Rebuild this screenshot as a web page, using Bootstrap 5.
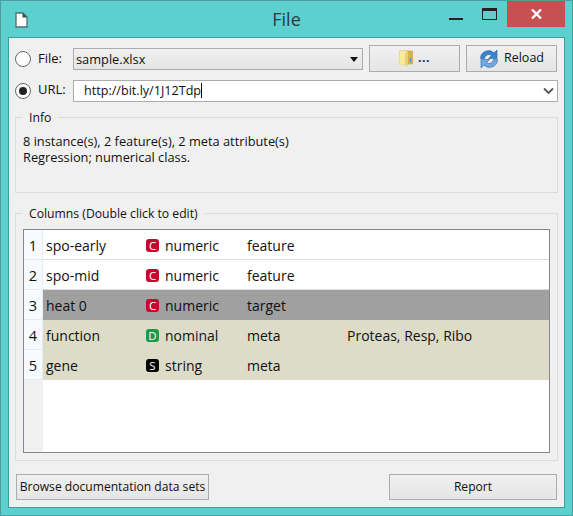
<!DOCTYPE html>
<html lang="en">
<head>
    <meta charset="UTF-8">
    <meta name="viewport" content="width=device-width, initial-scale=1.0">
    <title>File</title>
    <link href="https://cdn.jsdelivr.net/npm/bootstrap@5.3.3/dist/css/bootstrap.min.css" rel="stylesheet">
    <style>
        html, body { height: 100%; margin: 0; }
        body { background: #5bd0cf; font-family: "Open Sans", "Noto Sans", sans-serif; font-size: 12px; color: #111; overflow: hidden; }
        .win-frame { width: 573px; height: 516px; border: 1px solid #4a9e9e; display: flex; flex-direction: column; }
        .win-title { height: 36px; flex: none; display: flex; }
        .win-side { flex: 1; display: flex; }
        .win-doc { margin: 11px 0 0 14px; }
        .win-name { text-align: center; font-size: 18px; line-height: 36px; color: #2e3a3a; }
        .win-min { width: 14px; height: 2px; background: #222; margin-top: 17px; margin-right: 19px; }
        .win-max { width: 15px; height: 12px; border: 1.5px solid #222; border-top-width: 3px; margin-top: 7px; margin-right: 10px; }
        .win-close { width: 58px; height: 26px; background: #c75050; margin-right: 7px; display: flex; align-items: center; justify-content: center; }
        .win-body { flex: 1; background: #f0f0f0; margin: 0 7px 7px; border: 1px solid #3f9f9f; padding: 7px 6px; display: flex; flex-direction: column; }
        .qt-radio { width: 16px; height: 16px; border: 1px solid #666; border-radius: 50%; background: #fff; flex: none; display: flex; align-items: center; justify-content: center; }
        .qt-radio i { width: 8px; height: 8px; border-radius: 50%; background: #222; }
        .src-label { font-size: 13px; width: 42px; padding-left: 7px; flex: none; }
        .url-label { margin-top: -3px; }
        .qt-combo { height: 22px; border: 1px solid #acacac; background: linear-gradient(#f0f0f0, #e5e5e5); font-size: 12.8px; line-height: 20px; padding-left: 2px; flex: 1; position: relative; }
        .caret-down { position: absolute; right: 4px; top: 8px; width: 0; height: 0; border: 4px solid transparent; border-top: 5px solid #111; border-bottom: 0; }
        .qt-btn { border: 1px solid #acacac; border-radius: 0; background: linear-gradient(#f0f0f0, #e5e5e5); color: #111; font-size: 12.5px; padding: 0; display: flex; align-items: center; justify-content: center; white-space: nowrap; }
        .src-row { margin-right: 1px; }
        .src-btn { width: 91px; height: 27px; flex: none; margin-left: 6px; gap: 5px; }
        .btn-dots { color: #12305a; font-weight: 700; letter-spacing: .5px; }
        .url-input { height: 22px; flex: 1; border: 1px solid #acacac; background: #fff; font-size: 12.6px; line-height: 20px; padding-left: 10px; position: relative; }
        .text-cursor { display: inline-block; width: 1px; height: 15px; background: #000; vertical-align: -3px; }
        .url-chev { position: absolute; right: 3px; top: 6px; }
        .grp { border: 1px solid #dcdcdc; position: relative; }
        .grp-title { position: absolute; top: -9px; left: 6px; background: #f0f0f0; padding: 0 7px; font-size: 12.2px; line-height: 17px; }
        .info-grp { height: 76px; padding: 15px 7px 0; font-size: 12.8px; margin-top: 15px; }
        .info-line { height: 16px; line-height: 16px; overflow: hidden; }
        .cols-grp { height: 248px; margin-top: 20px; padding: 15px 7px 7px; }
        .var-view { height: 224px; border: 1px solid #828790; background: #fff; display: flex; flex-direction: column; }
        .var-table { margin: 0; table-layout: fixed; width: 100%; font-size: 14px; border-collapse: separate; border-spacing: 0; }
        .var-table td { height: 30px; padding: 2px 0 0 3px; line-height: 27px; border-bottom: 1px solid #d9dde8; background: transparent; box-shadow: none; color: #111; white-space: nowrap; }
        .var-table td.row-num { background: #f7fbff; border-bottom: 1px solid #e3ecf8; border-right: 1px solid #e3ecf8; text-align: center; padding: 2px 0 0; font-size: 14.5px; }
        .var-table tr.row-target td:not(.row-num) { background: #a0a0a0; border-bottom-color: #a0a0a0; }
        .var-table tr.row-meta td:not(.row-num) { background: #dddcc8; border-bottom-color: #dddcc8; }
        .type-tag { display: inline-block; width: 13px; height: 13px; border-radius: 3px; color: #fff; font-size: 11.5px; line-height: 13px; text-align: center; margin-right: 6px; vertical-align: 1px; }
        .tag-c { background: #c9062d; }
        .tag-d { background: #1d9a46; }
        .tag-s { background: #000; }
        .var-rest { flex: 1; display: flex; }
        .var-stub { width: 19px; background: #f0f0f0; }
        .foot-row { margin: 0 1px; }
        .foot-btn { height: 26px; font-size: 12.1px; }
        .browse-btn { width: 193px; }
        .report-btn { width: 168px; }
    </style>
</head>
<body>
    <div class="win-frame">
        <div class="win-title">
            <div class="win-side">
                <svg class="win-doc" width="13" height="16" viewBox="0 0 13 16"><path d="M1 1h7l4 4v10H1z" fill="#fff" stroke="#4d6f70" stroke-width="1.3"/><path d="M7.500 1v4.500H12z" fill="#33494a"/></svg>
            </div>
            <div class="win-name">File</div>
            <div class="win-side justify-content-end">
                <div class="win-min"></div>
                <div class="win-max"></div>
                <div class="win-close">
                    <svg width="11" height="10" viewBox="0 0 11 10"><path d="M1 .5l9 9M10 .5l-9 9" stroke="#fff" stroke-width="2.4"/></svg>
                </div>
            </div>
        </div>
        <div class="win-body">
            <div class="d-flex align-items-center src-row">
                <div class="qt-radio"></div>
                <div class="src-label">File:</div>
                <div class="qt-combo">sample.xlsx<span class="caret-down"></span></div>
                <button class="btn qt-btn src-btn">
                    <svg width="14" height="17" viewBox="0 0 14 17"><path d="M5 1h8.500v13H5z" fill="#dcb24a" stroke="#c79c3a" stroke-width=".6"/><path d="M.5 .5h6l2 1.500V16.500l-6-2-2-.5z" fill="#f8eb9e" stroke="#e4cf78" stroke-width=".6"/><path d="M6 3h2v12H6z" fill="#e9cf6e"/><path d="M11.500 8v4" stroke="#3d9be0" stroke-width="1.500"/></svg>
                    <span class="btn-dots">...</span>
                </button>
                <button class="btn qt-btn src-btn">
                    <svg width="20" height="20" viewBox="0 0 20 20"><path d="M1.500 9.500A8 8 0 0 1 15 3.800L18 1v8.500H9.500l3-3A4.300 4.300 0 0 0 5.500 9.500z" fill="#3a84cc" stroke="#2a659f" stroke-width=".6"/><path d="M18.500 10.500A8 8 0 0 1 5 16.200L2 19v-8.500h8.500l-3 3A4.300 4.300 0 0 0 14.500 10.500z" fill="#6fabe2" stroke="#2a659f" stroke-width=".6"/></svg>
                    <span>Reload</span>
                </button>
            </div>
            <div class="d-flex align-items-center mt-2">
                <div class="qt-radio"><i></i></div>
                <div class="src-label url-label">URL:</div>
                <div class="url-input">http://bit.ly/1J12Tdp<span class="text-cursor"></span>
                    <svg class="url-chev" width="11" height="8" viewBox="0 0 11 8"><path d="M1 1.500l4.500 4.500 4.500-4.500" fill="none" stroke="#555" stroke-width="1.800"/></svg>
                </div>
            </div>
            <div class="grp info-grp">
                <div class="grp-title">Info</div>
                <div class="info-line">8 instance(s), 2 feature(s), 2 meta attribute(s)</div>
                <div class="info-line">Regression; numerical class.</div>
            </div>
            <div class="grp cols-grp">
                <div class="grp-title">Columns (Double click to edit)</div>
                <div class="var-view">
                    <table class="table var-table">
                        <colgroup><col style="width:19px"><col style="width:100px"><col style="width:101px"><col style="width:100px"><col></colgroup>
                        <tbody>
                            <tr><td class="row-num">1</td><td>spo-early</td><td><span class="type-tag tag-c">C</span>numeric</td><td>feature</td><td></td></tr>
                            <tr><td class="row-num">2</td><td>spo-mid</td><td><span class="type-tag tag-c">C</span>numeric</td><td>feature</td><td></td></tr>
                            <tr class="row-target"><td class="row-num">3</td><td>heat 0</td><td><span class="type-tag tag-c">C</span>numeric</td><td>target</td><td></td></tr>
                            <tr class="row-meta"><td class="row-num">4</td><td>function</td><td><span class="type-tag tag-d">D</span>nominal</td><td>meta</td><td>Proteas, Resp, Ribo</td></tr>
                            <tr class="row-meta"><td class="row-num">5</td><td>gene</td><td><span class="type-tag tag-s">S</span>string</td><td>meta</td><td></td></tr>
                        </tbody>
                    </table>
                    <div class="var-rest"><div class="var-stub"></div></div>
                </div>
            </div>
            <div class="d-flex justify-content-between mt-auto foot-row">
                <button class="btn qt-btn foot-btn browse-btn">Browse documentation data sets</button>
                <button class="btn qt-btn foot-btn report-btn">Report</button>
            </div>
        </div>
    </div>
    <script src="https://cdn.jsdelivr.net/npm/bootstrap@5.3.3/dist/js/bootstrap.bundle.min.js"></script>
</body>
</html>
